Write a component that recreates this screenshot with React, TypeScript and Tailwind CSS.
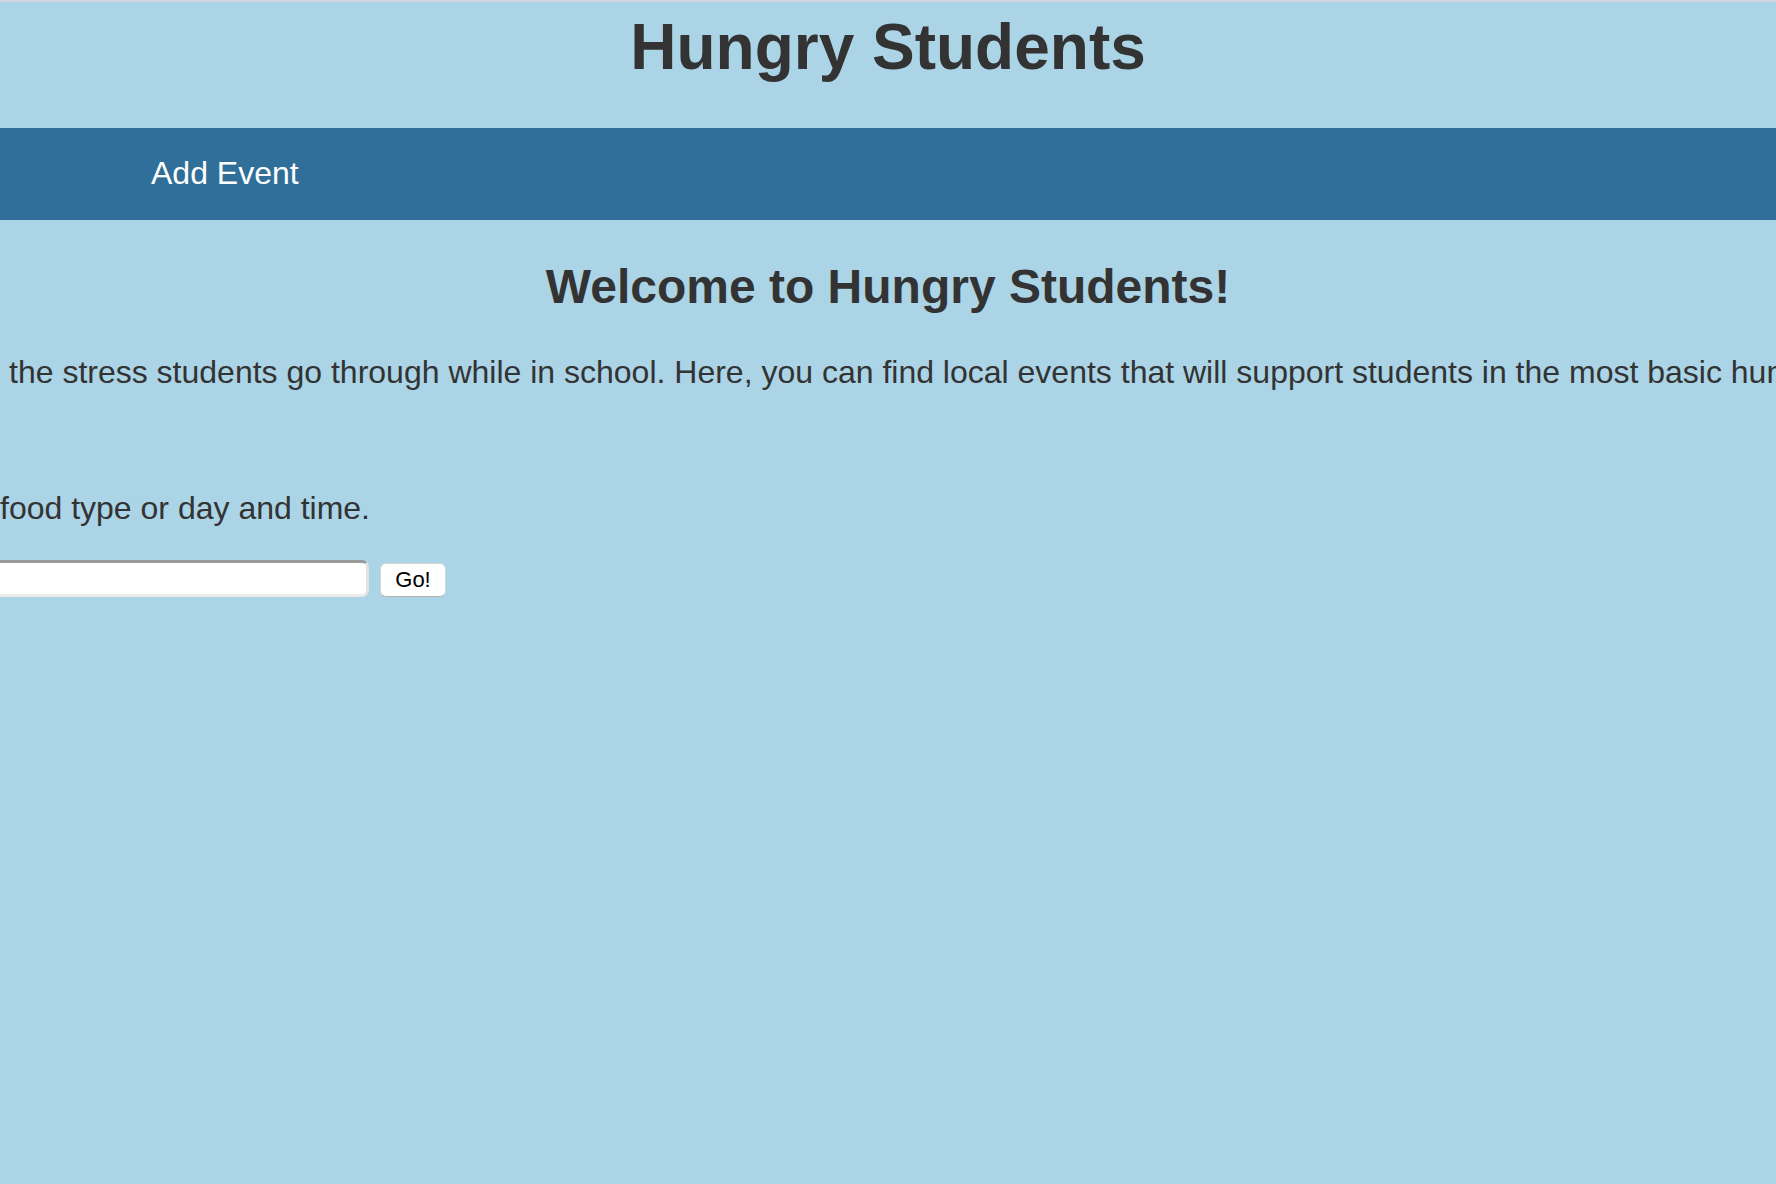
export default function App() {
  return (
    <div className="w-full min-h-screen overflow-hidden bg-[#abd4e6] text-[#333333] font-['Liberation_Sans',Arial,sans-serif]">
      <div className="h-[2px] bg-[#d3d6de]" />

      {/* Header */}
      <header className="h-[126px] pt-[9px]">
        <h1 className="text-center text-[64px] leading-[1.15] font-bold">Hungry Students</h1>
      </header>

      {/* Nav */}
      <nav className="h-[92px] bg-[#306f99] flex items-center pl-[151px]">
        <a href="#" className="text-white text-[32px] leading-none pb-[3px]">Add Event</a>
      </nav>

      {/* Main */}
      <main className="pt-[39px]">
        <h2 className="text-center text-[48px] leading-[1.15] font-bold">Welcome to Hungry Students!</h2>

        <p className="mt-[40px] pl-[9px] text-[32px] leading-[1.15] whitespace-nowrap">
          the stress students go through while in school. Here, you can find local events that will support students in the most basic human needs.
        </p>

        <p className="mt-[99px] text-[32px] leading-[1.15] whitespace-nowrap">food type or day and time.</p>

        <form className="mt-[33px] flex items-start gap-[11px]" onSubmit={(e) => e.preventDefault()}>
          <input
            type="text"
            className="w-[369px] h-[37px] bg-white border-t-[3px] border-t-[#9a9a9a] border-r-[3px] border-r-[#e2e2e2] border-b-[3px] border-b-[#ebebeb] rounded-r-[7px] outline-none"
          />
          <button
            type="submit"
            className="mt-[3px] w-[66px] h-[34px] bg-white border border-[#d4d4d4] border-b-[#b4b4b4] rounded-[6px] text-black text-[22px] leading-none"
          >
            Go!
          </button>
        </form>
      </main>
    </div>
  );
}
